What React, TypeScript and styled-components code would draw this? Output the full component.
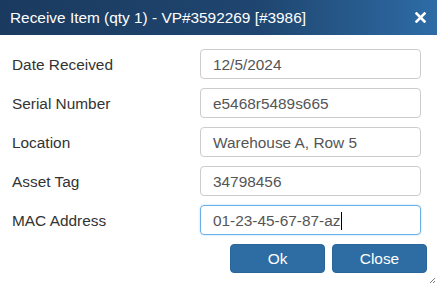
import React from 'react';
import styled, {createGlobalStyle} from 'styled-components';

const GlobalStyle = createGlobalStyle`
  html, body {
    margin: 0;
    padding: 0;
    background: #fff;
  }
  body {
    font-family: "Liberation Sans", Arial, sans-serif;
  }
`;

const Dialog = styled.div`
  position: relative;
  width: 437px;
  height: 285px;
  background: #fff;
  overflow: hidden;
`;

const TitleBar = styled.div`
  display: flex;
  align-items: center;
  justify-content: space-between;
  height: 35px;
  padding: 0 10px 0 10px;
  background: linear-gradient(to right, #1b3a5f 0%, #1f4670 60%, #2e6ca6 100%);
  color: #fff;
`;

const Title = styled.span`
  font-size: 15.4px;
  color: #fff;
`;

const CloseIcon = styled.button`
  display: flex;
  align-items: center;
  justify-content: center;
  width: 14px;
  height: 14px;
  padding: 0;
  border: none;
  background: transparent;
  cursor: pointer;
`;

const Body = styled.div`
  display: flex;
  flex-direction: column;
  gap: 9px;
  padding: 14px 16px 0 12px;
`;

const Row = styled.div`
  display: flex;
  align-items: center;
  height: 30px;
`;

const Label = styled.label`
  width: 188px;
  padding-top: 1px;
  font-size: 15.4px;
  color: #333;
`;

const Field = styled.div<{$focused?: boolean}>`
  display: flex;
  align-items: center;
  box-sizing: border-box;
  width: 221px;
  height: 30px;
  padding: 1px 12px 0;
  border: 1px solid ${p => (p.$focused ? '#66afe9' : '#ccc')};
  border-radius: 4px;
  font-size: 15.4px;
  color: #555;
  box-shadow: ${p => (p.$focused ? '0 0 2px rgba(102,175,233,.5)' : 'none')};
`;

const Caret = styled.span`
  display: inline-block;
  width: 1px;
  height: 18px;
  margin-left: 1px;
  background: #000;
`;

const Actions = styled.div`
  display: flex;
  justify-content: flex-end;
  gap: 7px;
  padding: 9px 10px 0 0;
`;

const Button = styled.button`
  width: 95px;
  height: 29px;
  border: 1px solid #2b669b;
  border-radius: 4px;
  background: #2e6da4;
  color: #fff;
  font-family: "Liberation Sans", Arial, sans-serif;
  font-size: 15.4px;
  cursor: pointer;
`;

const Grip = styled.svg`
  position: absolute;
  right: 1px;
  bottom: 1px;
`;

const fields = [
    {label: 'Date Received', value: '12/5/2024'},
    {label: 'Serial Number', value: 'e5468r5489s665'},
    {label: 'Location', value: 'Warehouse A, Row 5'},
    {label: 'Asset Tag', value: '34798456'},
    {label: 'MAC Address', value: '01-23-45-67-87-az', focused: true},
];

const App = () => {
    return (
        <>
            <GlobalStyle />
            <Dialog>
                <TitleBar>
                    <Title>Receive Item (qty 1) - VP#3592269 [#3986]</Title>
                    <CloseIcon aria-label="Close">
                        <svg width="11" height="11" viewBox="0 0 11 11">
                            <path d="M1.5 1.5 L9.5 9.5 M9.5 1.5 L1.5 9.5" stroke="#fff" strokeWidth="2.6" strokeLinecap="square" />
                        </svg>
                    </CloseIcon>
                </TitleBar>
                <Body>
                    {fields.map(f => (
                        <Row key={f.label}>
                            <Label>{f.label}</Label>
                            <Field $focused={f.focused}>
                                {f.value}
                                {f.focused && <Caret />}
                            </Field>
                        </Row>
                    ))}
                </Body>
                <Actions>
                    <Button>Ok</Button>
                    <Button>Close</Button>
                </Actions>
                {/* resize grip */}
                <Grip width="7" height="7" viewBox="0 0 7 7">
                    <path d="M6 1 L1 6 M6 4 L4 6" stroke="#777" strokeWidth="1" />
                </Grip>
            </Dialog>
        </>
    );
};

export default App;
